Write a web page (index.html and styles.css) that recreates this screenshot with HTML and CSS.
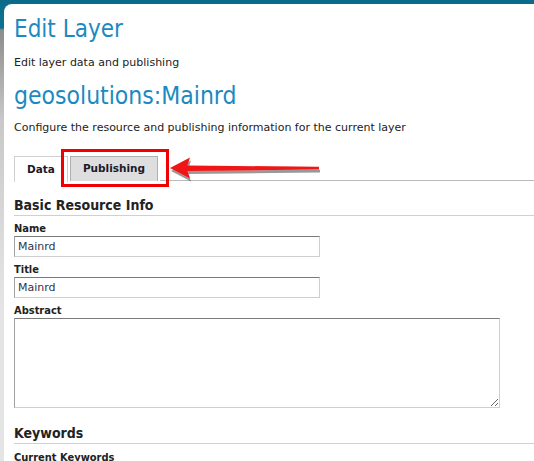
FILE: index.html
```html
<!DOCTYPE html>
<html>
<head>
<meta charset="utf-8">
<link rel="stylesheet" href="styles.css">
</head>
<body>
<div class="panel">
  <h1 class="title">Edit Layer</h1>
  <p class="lead">Edit layer data and publishing</p>
  <h2 class="subtitle">geosolutions:Mainrd</h2>
  <p class="lead lead-2">Configure the resource and publishing information for the current layer</p>

  <div class="tabs">
    <div class="tab tab-active">Data</div>
    <div class="tab">Publishing</div>
    <div class="tab-line"></div>
    <div class="callout-box"></div>
    <svg class="callout-arrow" width="170" height="32" viewBox="0 0 170 32">
      <defs>
        <filter id="sh" x="-10%" y="-50%" width="130%" height="200%">
          <feGaussianBlur in="SourceAlpha" stdDeviation="0.7"/>
          <feOffset dx="1" dy="3" result="b"/>
          <feComponentTransfer><feFuncA type="linear" slope="0.4"/></feComponentTransfer>
          <feMerge><feMergeNode/><feMergeNode in="SourceGraphic"/></feMerge>
        </filter>
      </defs>
      <path filter="url(#sh)" fill="#f01818" d="M1 12 L21 1.5 L18.5 9.5 L150 10.8 L150 13.4 L18.5 15 L21 22.5 Z"/>
    </svg>
  </div>

  <h3 class="section">Basic Resource Info</h3>
  <div class="field">
    <label class="label">Name</label>
    <input class="input" type="text" value="Mainrd">
  </div>
  <div class="field">
    <label class="label">Title</label>
    <input class="input" type="text" value="Mainrd">
  </div>
  <div class="field">
    <label class="label">Abstract</label>
    <textarea class="textarea"></textarea>
  </div>

  <h3 class="section section-kw">Keywords</h3>
  <div class="label label-kw">Current Keywords</div>
</div>
</body>
</html>
```

FILE: styles.css
```css
html, body {
  margin: 0;
  padding: 0;
}
body {
  height: 461px;
  overflow: hidden;
  font-family: "DejaVu Sans", sans-serif;
  color: #222;
  background: linear-gradient(to bottom, #0b6a8a 0, #0d7393 28px, #8c8c8c 30px, #c8c8c8 120px, #e4e4e4 300px);
}
.panel {
  position: relative;
  margin: 4px 0 0 4px;
  padding: 0 0 0 10px;
  background: #fff;
  border-top-left-radius: 8px;
  height: 457px;
  box-sizing: border-box;
}
.title {
  margin: 0;
  padding-top: 10px;
  font-family: "DejaVu Sans Condensed", "DejaVu Sans", sans-serif;
  font-size: 24px;
  line-height: 30px;
  font-weight: normal;
  color: #1b8ac0;
}
.lead {
  margin: 12px 0 0;
  font-size: 11px;
  line-height: 14px;
  color: #222;
}
.lead-2 {
  margin-top: 10px;
}
.subtitle {
  margin: 11px 0 0;
  font-family: "DejaVu Sans Condensed", "DejaVu Sans", sans-serif;
  font-size: 24.5px;
  line-height: 30px;
  font-weight: normal;
  color: #1b8ac0;
}
.tabs {
  position: relative;
  display: flex;
  align-items: flex-end;
  margin-top: 21px;
  height: 25px;
}
.tab {
  box-sizing: border-box;
  height: 25px;
  padding: 0 12px;
  font-size: 10.5px;
  font-weight: bold;
  line-height: 23px;
  color: #1a1a2a;
  background: #dedede;
  border: 1px solid #b0b0b0;
  border-bottom: none;
  margin-right: 2px;
  position: relative;
  z-index: 1;
}
.tab-active {
  background: #fff;
  border-color: #d0d0d0;
  height: 26px;
  line-height: 24px;
  margin-bottom: -1px;
}
.tab-line {
  flex: 1;
  align-self: flex-end;
  border-bottom: 1px solid #bbbbbb;
  height: 0;
}
.callout-box {
  position: absolute;
  left: 47px;
  top: -7px;
  width: 102px;
  height: 32px;
  border: 3px solid #f00000;
  z-index: 2;
}
.callout-arrow {
  position: absolute;
  left: 155px;
  top: 0px;
  z-index: 3;
}
.section {
  margin: 16px 0 0;
  font-family: "DejaVu Sans Condensed", "DejaVu Sans", sans-serif;
  font-size: 14px;
  line-height: 17px;
  font-weight: bold;
  color: #222;
  border-bottom: 1px solid #c8dca8;
  padding-bottom: 1px;
}
.section-kw {
  margin-top: 17px;
}
.field {
  display: flex;
  flex-direction: column;
  align-items: flex-start;
}
.label {
  display: block;
  font-family: "DejaVu Sans Condensed", "DejaVu Sans", sans-serif;
  font-size: 11px;
  line-height: 14px;
  font-weight: bold;
  color: #222;
  margin-top: 6px;
  margin-bottom: 0;
}
.label-kw {
  margin-top: 7px;
}
.input {
  box-sizing: border-box;
  width: 306px;
  height: 21px;
  margin: 0;
  padding: 0 3px;
  font-family: "DejaVu Sans", sans-serif;
  font-size: 11px;
  color: #33334a;
  border: 1px solid #cfcfcf;
  border-top-color: #7a7a7a;
  border-left-color: #a0a0a0;
  outline: none;
}
.textarea {
  box-sizing: border-box;
  width: 486px;
  height: 90px;
  margin: 0;
  padding: 2px;
  border: 1px solid #cfcfcf;
  border-top-color: #7a7a7a;
  border-left-color: #a0a0a0;
  resize: both;
}
```
